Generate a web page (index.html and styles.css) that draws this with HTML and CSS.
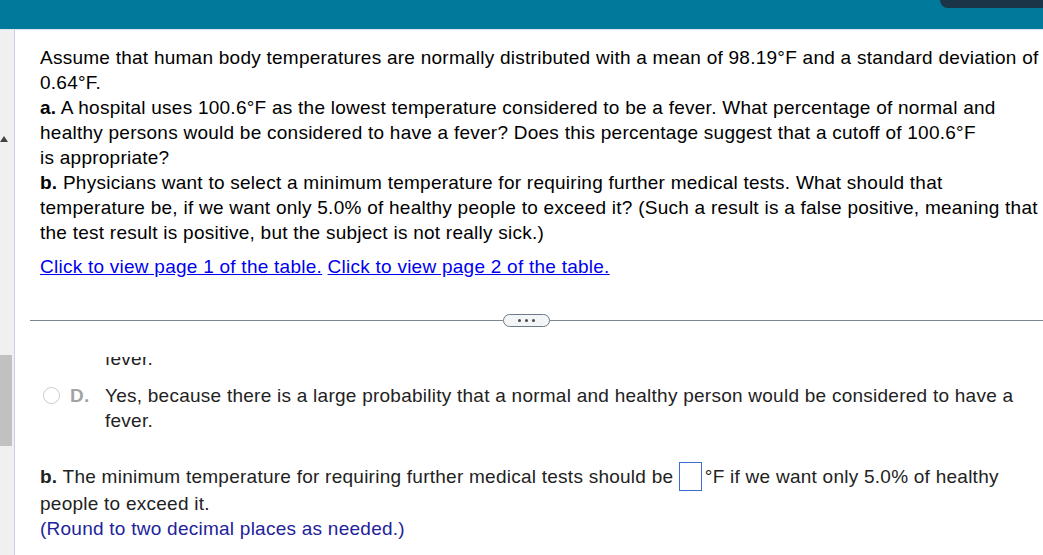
FILE: index.html
```html
<!DOCTYPE html>
<html>
<head>
<meta charset="utf-8">
<link rel="stylesheet" href="styles.css">
</head>
<body>
<header class="topbar"><div class="corner"></div></header>
<div class="main">
  <aside class="gutter">
    <div class="tri"></div>
    <div class="thumb"></div>
  </aside>
  <section class="content">
    <p class="question">Assume that human body temperatures are normally distributed with a mean of 98.19°F and a standard deviation of<br>0.64°F.<br><b>a.</b> A hospital uses 100.6°F as the lowest temperature considered to be a fever. What percentage of normal and<br>healthy persons would be considered to have a fever? Does this percentage suggest that a cutoff of 100.6°F<br>is appropriate?<br><b>b.</b> Physicians want to select a minimum temperature for requiring further medical tests. What should that<br>temperature be, if we want only 5.0% of healthy people to exceed it? (Such a result is a false positive, meaning that<br>the test result is positive, but the subject is not really sick.)</p>
    <p class="links"><a href="#">Click to view page 1 of the table.</a> <a href="#">Click to view page 2 of the table.</a></p>
    <div class="divider">
      <div class="rule-left"></div>
      <div class="pill"><span class="dot"></span><span class="dot"></span><span class="dot"></span></div>
      <div class="rule-right"></div>
    </div>
    <div class="answers">
      <div class="inner">
        <div class="tail">fever.</div>
        <div class="option">
          <span class="radio"></span>
          <span class="letter">D.</span>
          <span class="otext">Yes, because there is a large probability that a normal and healthy person would be considered to have a<br>fever.</span>
        </div>
        <p class="partb"><b>b.</b> The minimum temperature for requiring further medical tests should be <span class="box"></span>°F if we want only 5.0% of healthy<br>people to exceed it.<br><span class="hint">(Round to two decimal places as needed.)</span></p>
      </div>
    </div>
  </section>
</div>
</body>
</html>
```

FILE: styles.css
```css
html, body {
  margin: 0;
  padding: 0;
  height: 100%;
  overflow: hidden;
  background: #ffffff;
}
body {
  font-family: "Liberation Sans", Arial, sans-serif;
  font-size: 19px;
  letter-spacing: 0.25px;
  line-height: 25px;
  color: #000;
}
.topbar {
  position: relative;
  height: 29px;
  background: #00799a;
  border-bottom: 1px solid #dce5ec;
}
.corner {
  position: absolute;
  right: 0;
  top: 0;
  width: 103px;
  height: 8px;
  background: #1b3447;
  border-bottom-left-radius: 10px;
}
.main {
  display: flex;
  height: 525px;
}
.gutter {
  flex: 0 0 14px;
  background: #f0f0f0;
  border-right: 1px solid #c8d0e0;
  display: flex;
  flex-direction: column;
  align-items: flex-start;
}
.tri {
  margin-top: 106px;
  width: 0;
  height: 0;
  border-left: 4px solid transparent;
  border-right: 4px solid transparent;
  border-bottom: 6px solid #444;
}
.thumb {
  margin-top: 213px;
  width: 12px;
  height: 91px;
  background: #c1c1c1;
}
.content {
  flex: 1;
  min-width: 0;
  padding: 15px 0 0 25px;
  white-space: nowrap;
  display: flex;
  flex-direction: column;
}
p { margin: 0; }
.question b, .partb b { font-weight: bold; }
.links { margin-top: 9px; }
.links a { color: #0000ee; text-decoration: underline; }
.divider {
  margin: 34px 0 0 -10px;
  height: 14px;
  display: flex;
  align-items: center;
}
.rule-left { flex: 0 0 473px; height: 1px; background: #7d8790; }
.rule-right { flex: 1; height: 1px; background: #7d8790; }
.pill {
  box-sizing: border-box;
  width: 47px;
  height: 13px;
  border: 1px solid #6d7b88;
  border-radius: 7px;
  background: #f3f5f7;
  display: flex;
  align-items: center;
  justify-content: center;
  gap: 4px;
}
.dot {
  width: 3px;
  height: 3px;
  border-radius: 50%;
  background: #4a4a4a;
}
.answers {
  margin-top: 30px;
  flex: 1;
  overflow: hidden;
  color: #222;
}
.inner { margin-top: -11px; }
.tail { padding-left: 65px; }
.option {
  margin-top: 12px;
  display: flex;
  align-items: flex-start;
}
.radio {
  box-sizing: border-box;
  flex: 0 0 17px;
  height: 17px;
  margin: 4px 0 0 3px;
  border: 1.5px solid #c9c9c9;
  border-radius: 50%;
  background: #fff;
}
.letter {
  flex: 0 0 35px;
  margin-left: 10px;
  font-weight: bold;
  color: #a3a3a3;
}
.partb { margin-top: 29px; }
.box {
  display: inline-block;
  box-sizing: border-box;
  width: 23px;
  height: 29px;
  border: 1px solid #3a6fd0;
  vertical-align: -8.5px;
  margin-right: 3px;
}
.hint { color: #22229a; }
```
